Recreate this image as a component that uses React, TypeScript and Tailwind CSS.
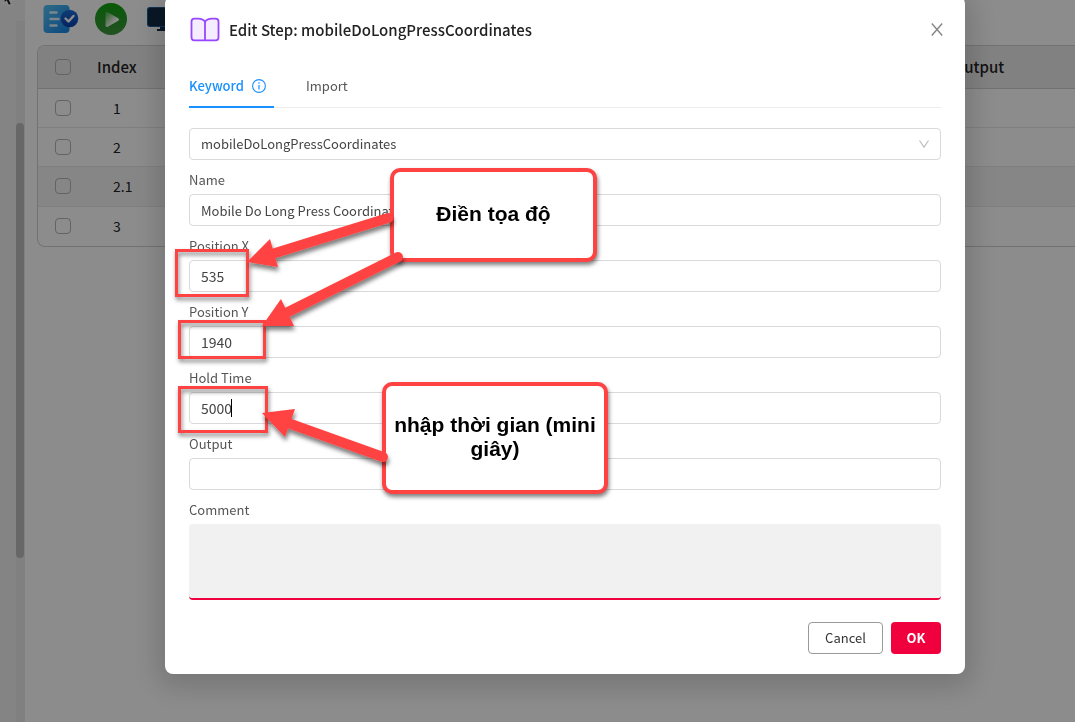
import React from "react";

const rows = [
  { index: "1", height: "h-[39px]" },
  { index: "2", height: "h-[39px]" },
  { index: "2.1", height: "h-10", active: true },
  { index: "3", height: "h-10" },
];

function StepsIcon() {
  return (
    <svg width="36" height="30" viewBox="0 0 36 30" aria-hidden="true">
      <defs>
        <linearGradient id="doc" x1="0" y1="0" x2="1" y2="1">
          <stop offset="0" stopColor="#55c4f5" />
          <stop offset="1" stopColor="#1583e8" />
        </linearGradient>
        <linearGradient id="badge" x1="0" y1="0" x2="0" y2="1">
          <stop offset="0" stopColor="#1d6fd6" />
          <stop offset="1" stopColor="#0a3fb0" />
        </linearGradient>
      </defs>
      <rect x="0.500" y="1" width="26" height="28" rx="4" fill="url(#doc)" />
      <path d="M7.500 8.500h6M7.500 15h8M7.500 21.500h6" stroke="#fff" strokeOpacity="0.850" strokeWidth="2.400" strokeLinecap="round" />
      <circle cx="26.500" cy="14.500" r="8.800" fill="url(#badge)" />
      <path d="m22.500 14.500 3 3 5-5.500" fill="none" stroke="#fff" strokeWidth="2.400" strokeLinecap="round" strokeLinejoin="round" />
    </svg>
  );
}

function PlayIcon() {
  return (
    <svg width="32" height="32" viewBox="0 0 32 32" aria-hidden="true">
      <defs>
        <linearGradient id="disc" x1="0" y1="0" x2="0" y2="1">
          <stop offset="0" stopColor="#0fa30c" />
          <stop offset="1" stopColor="#3f9440" />
        </linearGradient>
        <linearGradient id="tri" x1="0" y1="0" x2="1" y2="1">
          <stop offset="0" stopColor="#62b95a" />
          <stop offset="0.700" stopColor="#fff" />
        </linearGradient>
      </defs>
      <circle cx="16" cy="16" r="16" fill="url(#disc)" />
      <path d="M12 10.500 L22.500 16.500 L12 22.500 Z" fill="url(#tri)" stroke="url(#tri)" strokeWidth="3" strokeLinejoin="round" />
    </svg>
  );
}

function MonitorIcon() {
  return (
    <svg width="32" height="26" viewBox="0 0 32 26" aria-hidden="true">
      <rect x="0" y="0" width="32" height="20" rx="3" fill="#1c5a94" />
      <rect x="1" y="1" width="30" height="18" rx="2" fill="#102a45" />
      <path d="M13 20h6v2h3v2H10v-2h3z" fill="#102a45" />
    </svg>
  );
}

function BookIcon() {
  return (
    <svg width="32" height="26" viewBox="0 0 32 26" aria-hidden="true">
      <path
        d="M16 4.800C14.500 2.300 12 1.700 9 1.700H5.500C3.300 1.700 2.500 2.700 2.500 4.500V20.500C2.500 22.500 3.300 23.300 5.300 23.300H26.700C28.700 23.300 29.500 22.500 29.500 20.500V4.500C29.500 2.700 28.700 1.700 26.500 1.700H23C20 1.700 17.500 2.300 16 4.800Z"
        fill="#f5edff"
        stroke="#9747ff"
        strokeWidth="1.800"
        strokeLinejoin="round"
      />
      <path d="M16 4.500V23" stroke="#9747ff" strokeWidth="1.800" />
    </svg>
  );
}

function StepsPage() {
  return (
    <div className="flex h-screen overflow-hidden bg-white">
      <div className="w-4 shrink-0 bg-[#f0f0f0]" />
      <div className="flex w-[9px] shrink-0 flex-col bg-[#f0f0f0] pt-[21px]">
        <div className="flex-1 bg-[#e9e9e9] pt-[102px]">
          <div className="h-[435px] w-2 rounded-full bg-[#bcbcbc]" />
        </div>
      </div>
      <main className="min-w-0 flex-1 pl-3">
        <div className="flex h-[45px] items-start gap-4 pt-[3px] pl-[6px]">
          <button aria-label="Steps" className="mt-px"><StepsIcon /></button>
          <button aria-label="Run"><PlayIcon /></button>
          <button aria-label="Device" className="ml-1 mt-1"><MonitorIcon /></button>
        </div>
        <div className="overflow-hidden rounded-l-lg border border-r-0 border-[#d0d0d0]">
          <table className="w-full table-fixed border-collapse text-left">
            <colgroup>
              <col className="w-[51px]" />
              <col />
              <col className="w-[130px]" />
            </colgroup>
            <thead>
              <tr className="h-[42px] border-b border-[#d0d0d0] bg-[#ececec] text-[15px]">
                <th className="pl-[17px]">
                  <input type="checkbox" aria-label="Select all" className="block size-4 appearance-none rounded-[4px] border border-[#b4b4b4]" />
                </th>
                <th className="pl-2 font-medium">Index</th>
                <th className="pl-2 font-medium">Output</th>
              </tr>
            </thead>
            <tbody>
              {rows.map((row) => (
                <tr key={row.index} className={`${row.height} border-b border-[#e8e8e8] last:border-0 ${row.active ? "bg-[#f5f5f5]" : ""}`}>
                  <td className="pl-[17px]">
                    <input type="checkbox" aria-label={`Select step ${row.index}`} className="block size-4 appearance-none rounded-[4px] border border-[#b4b4b4]" />
                  </td>
                  <td className="pl-6 text-sm">{row.index}</td>
                  <td />
                </tr>
              ))}
            </tbody>
          </table>
        </div>
      </main>
      <svg className="absolute top-0 left-0" width="14" height="8" viewBox="0 0 14 8" aria-hidden="true">
        <path d="M4 -6V3.500L6.500 1.300L8.500 5.500L11.500 4.200L9.500 0H13Z" fill="#222" stroke="#fff" strokeWidth="1.200" />
      </svg>
    </div>
  );
}

const inputClass =
  "block h-8 w-full rounded-[4px] border border-[#d9d9d9] bg-white px-[11px] text-[#444] outline-none";

function Field({ id, label, value, numeric, caret }: { id: string; label: string; value: string; numeric?: boolean; caret?: boolean }) {
  return (
    <div className="flex flex-col gap-1 pt-[10px]">
      <label htmlFor={id} className="h-5 text-[13px] leading-5">{label}</label>
      <div className="relative">
        <input id={id} type="text" defaultValue={value} className={`${inputClass} ${numeric ? "text-sm" : "text-[13px]"}`} />
        {caret && <span className="absolute top-[7px] left-[42px] h-[18px] w-px bg-black" />}
      </div>
    </div>
  );
}

function Arrow({ head, from, to }: { head: string; from: [number, number]; to: [number, number] }) {
  return (
    <g filter="url(#soft)">
      <line x1={from[0]} y1={from[1]} x2={to[0]} y2={to[1]} stroke="#ff4343" strokeWidth="10" strokeLinecap="round" />
      <polygon points={head} fill="#ff4343" />
    </g>
  );
}

const markShadow = "drop-shadow-[1px_3px_2px_rgba(0,0,0,0.5)]";

function Annotations() {
  return (
    <div className="pointer-events-none absolute inset-0 font-['Liberation_Sans',sans-serif] text-[21px] leading-6 font-bold text-black">
      <div className={`absolute top-[253px] left-[10px] h-12 w-[74px] border-3 border-[#ff4343] ${markShadow}`} />
      <div className={`absolute top-[324px] left-[13px] h-[39px] w-[88px] border-3 border-[#ff4343] ${markShadow}`} />
      <div className={`absolute top-[390px] left-[13px] h-[47px] w-[90px] border-3 border-[#ff4343] ${markShadow}`} />
      <div className={`absolute top-[172px] left-[225px] flex h-[94px] w-[207px] items-center justify-center rounded-[10px] border-4 border-[#ff4343] bg-white pb-[2px] text-center ${markShadow}`}>
        Điền tọa độ
      </div>
      <div className={`absolute top-[386px] left-[217px] flex h-28 w-[226px] items-center justify-center rounded-[10px] border-4 border-[#ff4343] bg-white px-1 pb-[2px] text-center ${markShadow}`}>
        nhập thời gian (mini giây)
      </div>
      <svg className="absolute top-0 left-0" width="800" height="678" viewBox="165 -4 800 678" aria-hidden="true">
        <defs>
          <filter id="soft" x="-20%" y="-20%" width="140%" height="160%">
            <feDropShadow dx="1" dy="4" stdDeviation="2" floodColor="#000" floodOpacity="0.500" />
          </filter>
        </defs>
        <Arrow head="247,262 270,239 278,267" from={[272, 254]} to={[388, 218]} />
        <Arrow head="262,326 281,299 294,326" from={[286, 313]} to={[398, 257]} />
        <Arrow head="262,413 295,409 285,437" from={[288, 423]} to={[383, 457]} />
      </svg>
    </div>
  );
}

function EditStepDialog() {
  return (
    <div
      role="dialog"
      aria-labelledby="dialog-title"
      className="relative -mt-1 w-full max-w-[800px] self-start rounded-lg bg-white px-6 pt-[18px] pb-5 text-[#555] shadow-[0_6px_28px_8px_rgba(0,0,0,0.16)]"
    >
      <header className="flex h-8 items-center">
        <BookIcon />
        <h1 id="dialog-title" className="ml-2 flex-1 text-[15px] font-medium text-[#222]">
          Edit Step: mobileDoLongPressCoordinates
        </h1>
        <button aria-label="Close" className="-mr-[2px]">
          <svg width="12" height="14" viewBox="0 0 12 14" aria-hidden="true">
            <path d="M0.800 0.500 11.200 12.500M11.200 0.500 0.800 12.500" stroke="#858585" strokeWidth="1.400" />
          </svg>
        </button>
      </header>

      <nav role="tablist" className="mt-5 flex h-[42px] border-b border-[#ededed] text-[13px]">
        <button role="tab" aria-selected="true" className="-mb-px flex w-[85px] items-center gap-2 border-b-2 border-[#1890ff] font-medium text-[#1890ff]">
          Keyword
          <svg width="14" height="14" viewBox="0 0 14 14" fill="none" aria-hidden="true">
            <circle cx="7" cy="7" r="6.400" stroke="#1890ff" strokeWidth="1.100" />
            <path d="M7 6v4.500M7 3.300v1.400" stroke="#1890ff" strokeWidth="1.200" />
          </svg>
        </button>
        <button role="tab" aria-selected="false" className="-mb-px ml-8 border-b-2 border-transparent">Import</button>
      </nav>

      <form className="mt-5" onSubmit={(e) => e.preventDefault()}>
        <div className="relative">
          <select aria-label="Keyword" className={`${inputClass} appearance-none text-[13px]`}>
            <option>mobileDoLongPressCoordinates</option>
          </select>
          <svg className="absolute top-3 right-3" width="10" height="9" viewBox="0 0 10 9" fill="none" aria-hidden="true">
            <path d="M0.500 0.500 5 7.200 9.500 0.500" stroke="#bfbfbf" strokeWidth="1.200" />
          </svg>
        </div>
        <Field id="name" label="Name" value="Mobile Do Long Press Coordinates" />
        <Field id="position-x" label="Position X" value="535" numeric />
        <Field id="position-y" label="Position Y" value="1940" numeric />
        <Field id="hold-time" label="Hold Time" value="5000" numeric caret />
        <Field id="output" label="Output" value="" />
        <div className="flex flex-col gap-1 pt-[10px]">
          <label htmlFor="comment" className="h-5 text-[13px] leading-5">Comment</label>
          <textarea id="comment" className="block h-[76px] w-full resize-none rounded-[4px] border-b-2 border-[#f0003c] bg-[#f1f1f1] px-3 py-2 text-[13px] outline-none" />
        </div>
        <div className="mt-[22px] flex justify-end gap-2 text-[13px]">
          <button type="button" className="h-8 w-[75px] rounded-[4px] border border-[#999] text-[#333]">Cancel</button>
          <button type="submit" className="h-8 w-[50px] rounded-[4px] bg-[#f0003c] font-bold text-white">OK</button>
        </div>
      </form>
      <Annotations />
    </div>
  );
}

export default function App() {
  return (
    <div className="font-['Noto_Sans_CJK_SC',sans-serif] text-[#222]">
      <StepsPage />
      <div className="fixed inset-0 flex justify-center bg-black/45 pl-[55px]">
        <EditStepDialog />
      </div>
    </div>
  );
}
